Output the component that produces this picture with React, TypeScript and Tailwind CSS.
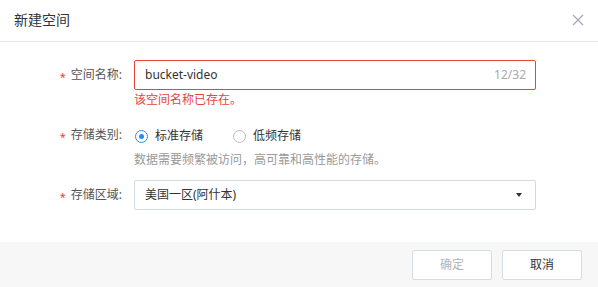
export default function App() {
  return (
    <div className="w-[598px] h-[287px] bg-white flex flex-col text-[#333] font-['Noto_Sans','Noto_Sans_CJK_SC',sans-serif]">
      <div className="h-[42px] shrink-0 border-b border-[#e6e6e6] flex items-center justify-between pl-[14px] pr-[14px] pb-[2px]">
        <div className="text-[14px] text-[#333]">新建空间</div>
        <svg width="12" height="12" viewBox="0 0 12 12">
          <path d="M1 1L11 11M11 1L1 11" stroke="#a3abb8" strokeWidth="1.3" fill="none" />
        </svg>
      </div>
      <div className="flex-1 pt-[18px] text-[12px]">
        <div className="flex">
          <div className="w-[122px] h-[30px] flex items-center justify-end text-[#555]">
            <span className="text-[#e6453a] text-[11px] mr-[5px] translate-y-[2px]">*</span>空间名称:
          </div>
          <div className="ml-[12px] w-[402px]">
            <div className="h-[30px] border border-[#e6453a] rounded-[2px] flex items-center justify-between pl-[10px] pr-[9px]">
              <span className="text-[#333]">bucket-video</span>
              <span className="text-[#aaa]">12/32</span>
            </div>
            <div className="h-[20px] leading-[20px] text-[#e6453a]">该空间名称已存在。</div>
          </div>
        </div>
        <div className="flex mt-[15px]">
          <div className="w-[122px] h-[20px] flex items-center justify-end text-[#555]">
            <span className="text-[#e6453a] text-[11px] mr-[5px] translate-y-[2px]">*</span>存储类别:
          </div>
          <div className="ml-[12px] w-[402px]">
            <div className="h-[20px] flex items-center translate-y-[1px]">
              <span className="ml-[1px] w-[13px] h-[13px] rounded-full border border-[#2d8cf0] flex items-center justify-center">
                <span className="w-[5px] h-[5px] rounded-full bg-[#2d8cf0]" />
              </span>
              <span className="ml-[7px] text-[#333]">标准存储</span>
              <span className="ml-[30px] w-[13px] h-[13px] rounded-full border border-[#b8bec8]" />
              <span className="ml-[7px] text-[#333]">低频存储</span>
            </div>
            <div className="mt-[5px] h-[20px] leading-[20px] text-[#999]">数据需要频繁被访问，高可靠和高性能的存储。</div>
          </div>
        </div>
        <div className="flex mt-[10px]">
          <div className="w-[122px] h-[30px] flex items-center justify-end text-[#555]">
            <span className="text-[#e6453a] text-[11px] mr-[5px] translate-y-[2px]">*</span>存储区域:
          </div>
          <div className="ml-[12px] w-[402px] h-[30px] border border-[#d3dae4] rounded-[2px] flex items-center justify-between pl-[10px] pr-[13px]">
            <span className="text-[#333]">美国一区(阿什本)</span>
            <svg width="6" height="4" viewBox="0 0 6 4">
              <path d="M0 0H6L3 4Z" fill="#333" />
            </svg>
          </div>
        </div>
      </div>
      <div className="h-[45px] shrink-0 bg-[#f7f7f7] flex items-center justify-end gap-[10px] pr-[16px] text-[12px]">
        <div className="w-[80px] h-[30px] border border-[#d3dce7] rounded-[2px] bg-white flex items-center justify-center text-[#b4b4b4]">确定</div>
        <div className="w-[80px] h-[30px] border border-[#d3dce7] rounded-[2px] bg-white flex items-center justify-center text-[#333]">取消</div>
      </div>
    </div>
  );
}
